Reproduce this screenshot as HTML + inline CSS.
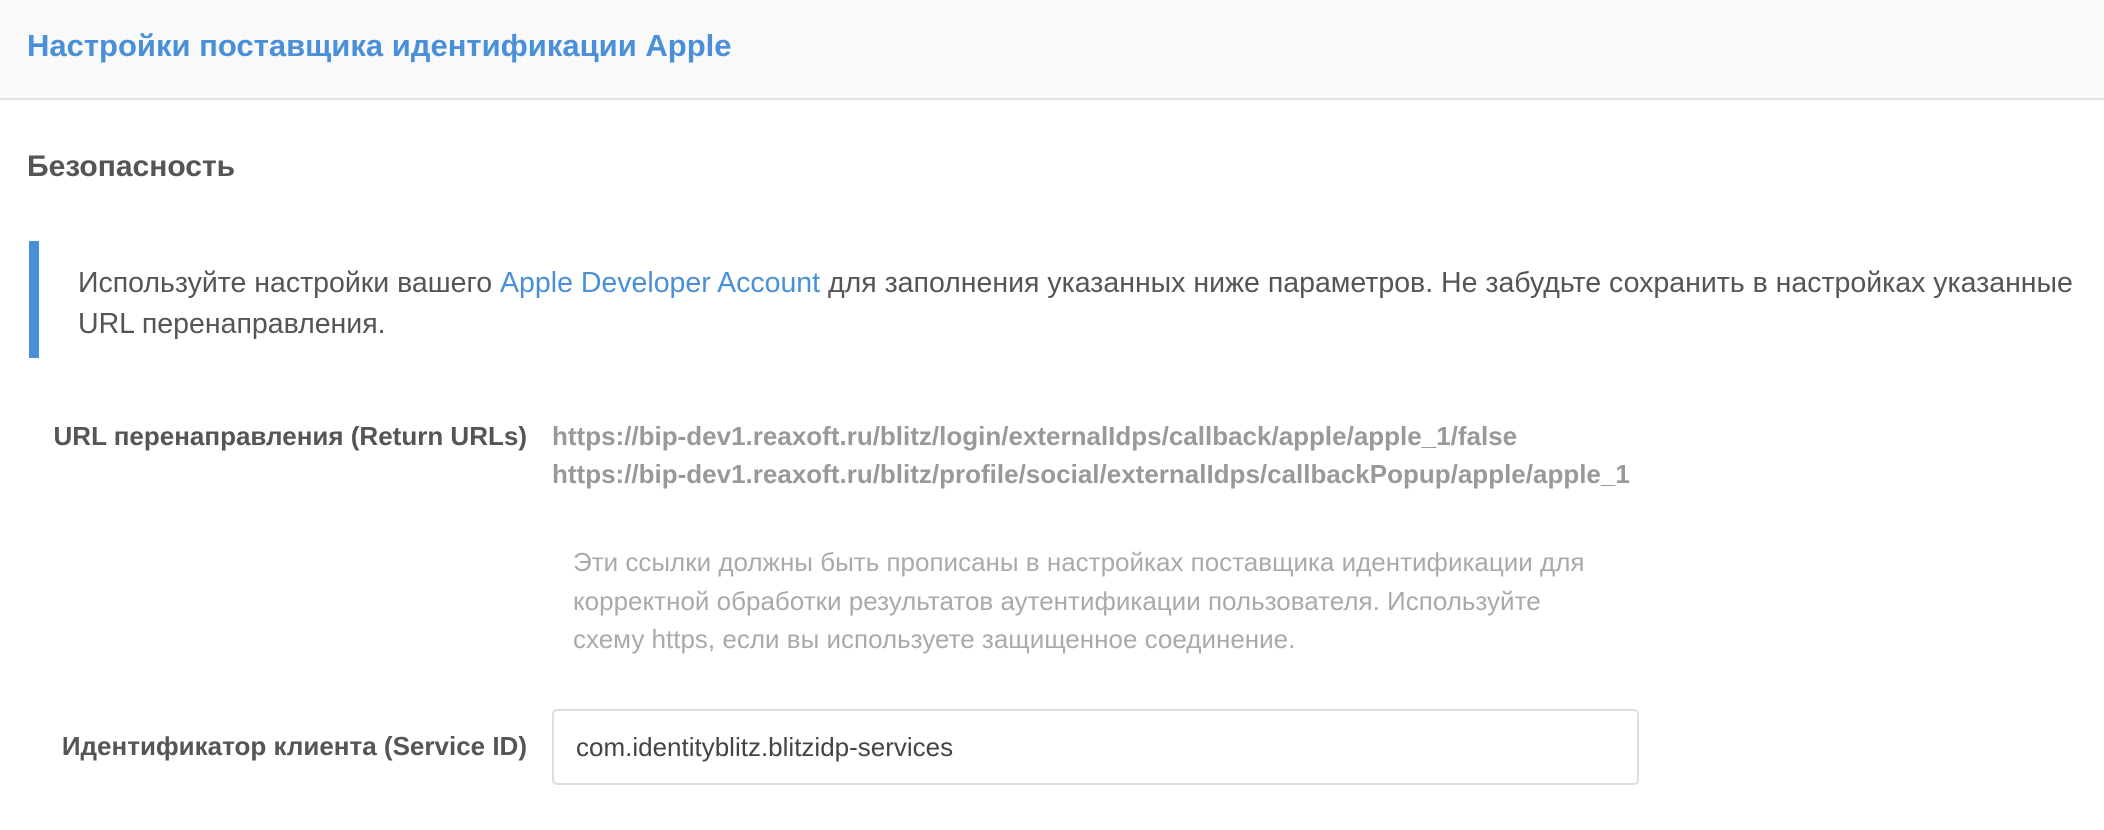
<!DOCTYPE html>
<html><head><meta charset="utf-8"><style>
*{margin:0;padding:0;box-sizing:border-box}
body{width:2104px;height:830px;background:#fff;font-family:"Liberation Sans",Arial,sans-serif;position:relative;overflow:hidden;color:#555}
.hdr{position:absolute;left:0;top:0;width:2104px;height:100px;background:#f9f9f9;border-bottom:2px solid #e2e2e2}
.t{position:absolute;left:27px;top:28px;font-size:31px;font-weight:bold;color:#4a90d9;white-space:nowrap}
.s{position:absolute;left:27px;top:150px;font-size:30px;font-weight:bold;color:#555}
.bar{position:absolute;left:29px;top:241px;width:10px;height:117px;background:#4a90d9}
.info{position:absolute;left:78px;top:263px;width:2020px;font-size:28.5px;line-height:41px;color:#555}
.info a{color:#4a90d9;text-decoration:none}
.lbl{position:absolute;right:1577px;font-size:26px;font-weight:bold;color:#555;white-space:nowrap;text-align:right}
.val{position:absolute;left:552px;top:417px;font-size:26px;font-weight:bold;color:#999;line-height:38px;white-space:nowrap}
.help{position:absolute;left:573px;top:543px;width:1030px;font-size:26px;line-height:38.5px;color:#aaa}
.inp{position:absolute;left:552px;top:709px;width:1087px;height:76px;border:2px solid #ddd;border-radius:5px;font-size:26px;color:#444;padding-left:22px;line-height:72px}
</style></head><body>
<div class="hdr"><div class="t">Настройки поставщика идентификации Apple</div></div>
<div class="s">Безопасность</div>
<div class="bar"></div>
<div class="info">Используйте настройки вашего <a>Apple Developer Account</a> для заполнения указанных ниже параметров. Не забудьте сохранить в настройках указанные URL перенаправления.</div>
<div class="lbl" style="top:421px">URL перенаправления (Return URLs)</div>
<div class="val">https://bip-dev1.reaxoft.ru/blitz/login/externalIdps/callback/apple/apple_1/false<br>https://bip-dev1.reaxoft.ru/blitz/profile/social/externalIdps/callbackPopup/apple/apple_1</div>
<div class="help">Эти ссылки должны быть прописаны в настройках поставщика идентификации для корректной обработки результатов аутентификации пользователя. Используйте схему https, если вы используете защищенное соединение.</div>
<div class="lbl" style="top:731px">Идентификатор клиента (Service ID)</div>
<div class="inp">com.identityblitz.blitzidp-services</div>
</body></html>
